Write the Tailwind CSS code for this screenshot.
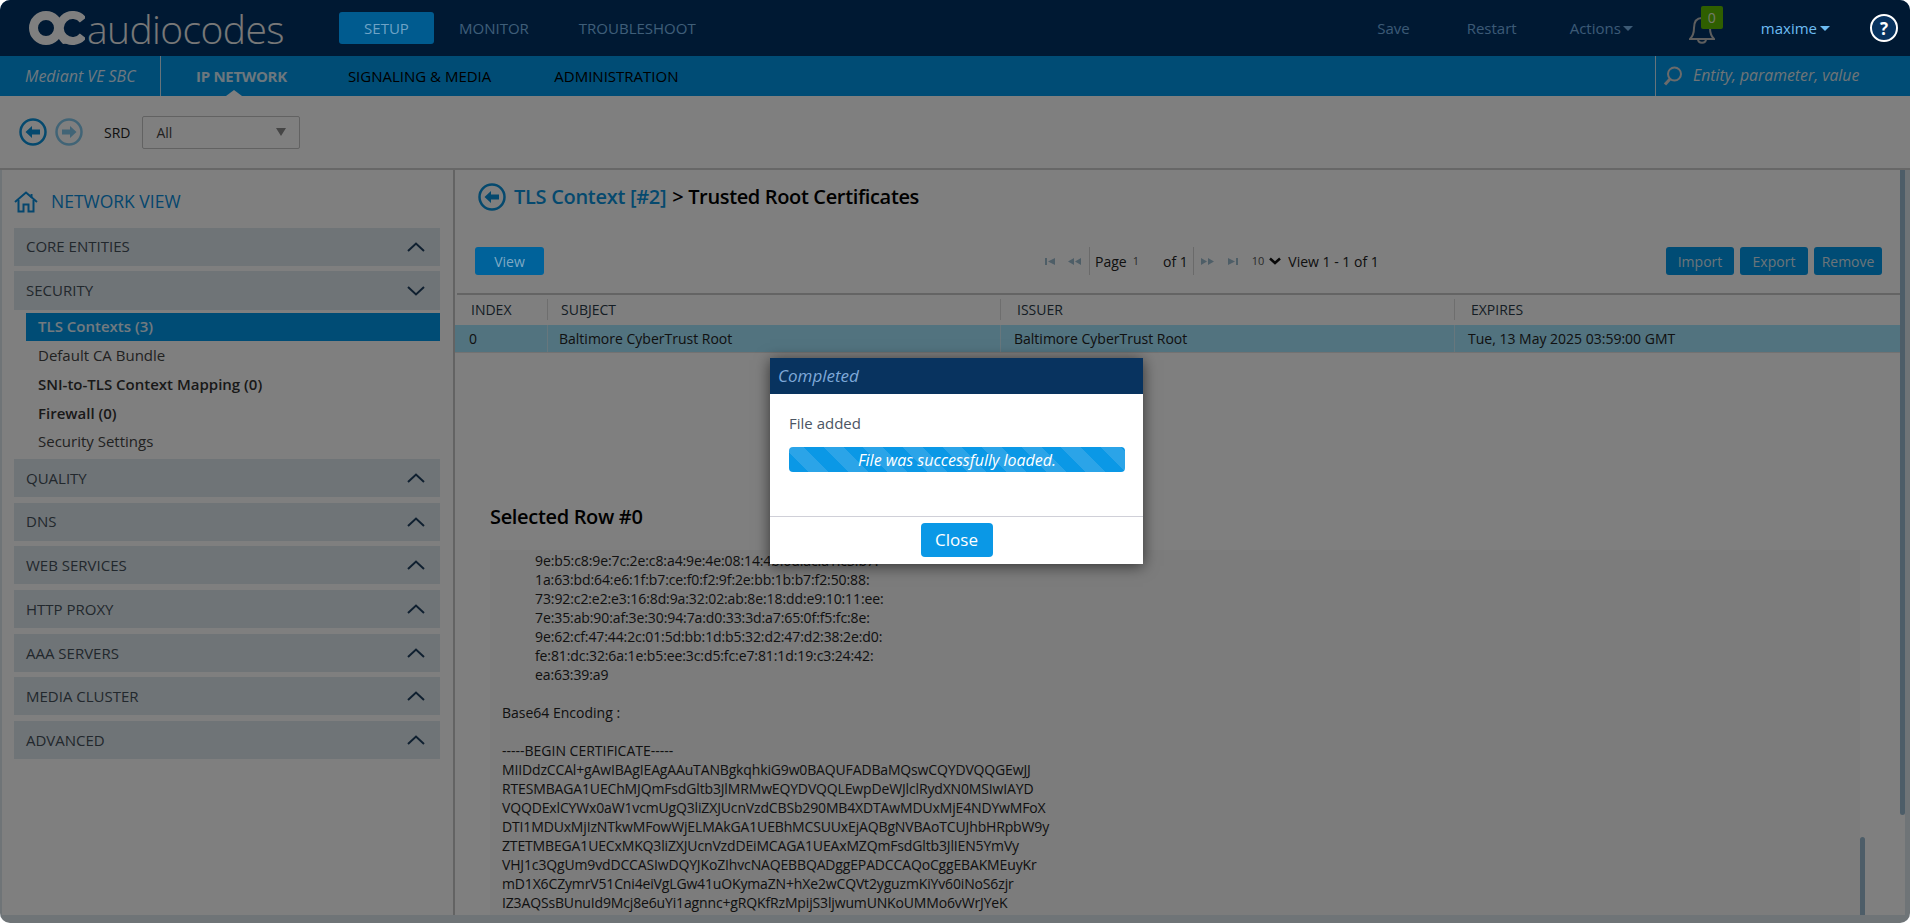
<!DOCTYPE html>
<html lang="en">
<head>
    <meta charset="UTF-8">
    <title>Trusted Root Certificates</title>
    <script src="https://cdn.jsdelivr.net/npm/@tailwindcss/browser@4"></script>
</head>
<body class="bg-white overflow-hidden">
<div class="relative w-[1910px] h-[923px] overflow-hidden rounded-[10px] bg-white font-['Open_Sans',sans-serif] text-[14px] text-[#222]">

    <!-- top bar -->
    <div class="h-[56px] bg-[#003366] flex items-center">
        <div class="w-[339px] pl-[29px] flex items-center h-full">
            <svg width="56" height="34" viewBox="0 0 56 34" class="shrink-0">
                <circle cx="17" cy="17" r="12.5" fill="none" stroke="#fff" stroke-width="9"/>
                <path d="M30 8 C34 16 36 28 44 32 L34 33 C31 30 29 27 28 24Z" fill="#fff"/>
                <path d="M54 9 A13 13 0 1 0 54 25" fill="none" stroke="#fff" stroke-width="8"/>
            </svg>
            <span class="text-[39px] leading-none font-light text-[#f0f0f0] tracking-[-0.6px] ml-[2px]">audiocodes</span>
        </div>
        <div class="relative z-20 w-[95px] h-[32px] bg-[#005b8f] rounded-[3px] flex items-center justify-center text-[#6fa3c6] text-[15px]">SETUP</div>
        <div class="ml-[25px] text-[15px] text-[#7fbcf0]">MONITOR</div>
        <div class="ml-[50px] text-[15px] text-[#7fbcf0]">TROUBLESHOOT</div>
        <div class="flex-1"></div>
        <div class="text-[15px] text-[#78b4ea]">Save</div>
        <div class="ml-[57px] text-[15px] text-[#78b4ea]">Restart</div>
        <div class="ml-[54px] -translate-x-[1px] text-[15px] text-[#78b4ea] flex items-center gap-[2px]">Actions
            <span class="w-0 h-0 border-x-[5px] border-x-transparent border-t-[5px] border-t-[#78b4ea]"></span>
        </div>
        <div class="relative ml-[55px] w-[36px] h-[56px]">
            <svg width="26" height="28" viewBox="0 0 26 28" class="absolute left-0 top-[16px]" fill="none" stroke="#bdbdbd" stroke-width="2">
                <path d="M13 2 C7 2 5 7 5 12 C5 17 4 20 1 23 L25 23 C22 20 21 17 21 12 C21 7 19 2 13 2Z"/>
                <path d="M9 23 C9 28 17 28 17 23"/>
            </svg>
            <div class="absolute left-[12px] top-[6px] w-[22px] h-[23px] rounded-[2px] bg-[#5fbe00] text-[#e6f5d8] text-[14px] leading-[23px] text-center">0</div>
        </div>
        <div class="relative z-20 ml-[36px] text-[15px] text-[#6dbcf2] flex items-center gap-[3px]">maxime
            <span class="w-0 h-0 border-x-[5px] border-x-transparent border-t-[5px] border-t-[#6dbcf2]"></span>
        </div>
        <div class="relative z-20 ml-[40px] mr-[12px] w-[28px] h-[28px] rounded-full border-[2.5px] border-white bg-[#08335f] flex items-center justify-center text-white font-bold text-[17px] leading-none">?</div>
    </div>

    <!-- sub nav -->
    <div class="relative h-[40px] bg-[#0098ea] flex items-center">
        <div class="w-[161px] h-full pl-[25px] flex items-center italic text-[16px] text-[#dcefff] border-r border-[#cfe6f5]">Mediant VE SBC</div>
        <div class="ml-[35px] text-[15px] font-bold text-[#d8eefc] tracking-[-0.3px]">IP NETWORK</div>
        <div class="ml-[61px] text-[15px] text-black">SIGNALING &amp; MEDIA</div>
        <div class="ml-[63px] text-[15px] text-black">ADMINISTRATION</div>
        <span class="absolute left-[226px] bottom-0 w-0 h-0 border-x-[8px] border-x-transparent border-b-[6px] border-b-white"></span>
        <div class="flex-1"></div>
        <div class="w-[255px] h-full border-l border-[#cfe6f5] flex items-center pl-[7px]">
            <svg width="20" height="20" viewBox="0 0 20 20" fill="none" stroke="#d6d6d6" stroke-width="2" class="shrink-0">
                <circle cx="11.5" cy="8" r="6.5"/>
                <path d="M7 13 L2 18.5" stroke-width="3"/>
            </svg>
            <span class="ml-[10px] italic text-[15.8px] text-[#dfe8ee]">Entity, parameter, value</span>
        </div>
    </div>

    <!-- srd toolbar -->
    <div class="h-[74px] pl-[19px] flex items-center border-b-2 border-[#cfcfcf]">
        <svg width="28" height="28" viewBox="0 0 28 28">
            <circle cx="14" cy="14" r="12.5" fill="none" stroke="#0a93dc" stroke-width="2.5"/>
            <path d="M6.5 14 L13 8 L13 11.5 L21 11.5 L21 16.5 L13 16.5 L13 20Z" fill="#0a93dc"/>
        </svg>
        <svg width="28" height="28" viewBox="0 0 28 28" class="ml-[8px] opacity-50">
            <circle cx="14" cy="14" r="12.5" fill="none" stroke="#0a93dc" stroke-width="2.5"/>
            <path d="M21.5 14 L15 8 L15 11.5 L7 11.5 L7 16.5 L15 16.5 L15 20Z" fill="#0a93dc"/>
        </svg>
        <span class="ml-[21px] text-[14px] text-[#222]">SRD</span>
        <div class="ml-[12px] w-[158px] h-[33px] border border-[#c4c4c4] rounded-[2px] pl-[13px] pr-[13px] flex items-center justify-between text-[14px] text-[#444]">
            All
            <span class="w-0 h-0 border-x-[5px] border-x-transparent border-t-[8px] border-t-[#8a8a8a]"></span>
        </div>
    </div>

    <div class="flex h-[753px]">
        <!-- sidebar -->
        <div class="w-[455px] h-full shrink-0 border-r-2 border-[#c6c6c6] pl-[14px] pr-[13px]">
            <div class="h-[58px] pt-[5px] flex items-center">
                <svg width="24" height="22" viewBox="0 0 24 22" fill="none" stroke="#0a8ddc" stroke-width="2" class="shrink-0">
                    <path d="M1 11 L12 1.5 L23 11"/>
                    <path d="M4.5 9 L4.5 20.5 L9.5 20.5 L9.5 13.5 L14.5 13.5 L14.5 20.5 L19.5 20.5 L19.5 9"/>
                    <path d="M17.5 3 L17.5 6.5"/>
                </svg>
                <span class="ml-[13px] text-[17.5px] text-[#0a8ddc]">NETWORK VIEW</span>
            </div>
            <div class="h-[38px] pb-[1px] bg-[#dfe8ee] pl-[12px] pr-[15px] flex items-center justify-between text-[15px] text-[#44505a]">CORE ENTITIES
                <svg width="18" height="10" viewBox="0 0 18 10" fill="none" stroke="#1f4060" stroke-width="2"><path d="M1 9 L9 1.5 L17 9"/></svg>
            </div>
            <div class="mt-[5px] h-[39px] bg-[#dfe8ee] pl-[12px] pr-[15px] flex items-center justify-between text-[15px] text-[#44505a]">SECURITY
                <svg width="18" height="10" viewBox="0 0 18 10" fill="none" stroke="#1f4060" stroke-width="2"><path d="M1 1 L9 8.5 L17 1"/></svg>
            </div>
            <div class="mt-[3px] ml-[12px] h-[28px] pb-[1px] bg-[#0098ea] pl-[12px] flex items-center font-semibold text-[15px] text-[#e4f4ff]">TLS Contexts (3)</div>
            <div class="ml-[12px] pl-[12px] h-[29px] flex items-center text-[15px] text-[#444]">Default CA Bundle</div>
            <div class="ml-[12px] pl-[12px] h-[29px] flex items-center font-semibold text-[15px] text-[#333]">SNI-to-TLS Context Mapping (0)</div>
            <div class="ml-[12px] pl-[12px] h-[28px] flex items-center font-semibold text-[15px] text-[#333]">Firewall (0)</div>
            <div class="ml-[12px] pl-[12px] h-[28px] mb-[4px] flex items-center text-[15px] text-[#444]">Security Settings</div>
            <div class="flex flex-col gap-[5.7px] text-[15px]">
                <div class="h-[38px] bg-[#dfe8ee] pl-[12px] pr-[15px] flex items-center justify-between text-[#44505a]">QUALITY
                    <svg width="18" height="10" viewBox="0 0 18 10" fill="none" stroke="#1f4060" stroke-width="2"><path d="M1 9 L9 1.5 L17 9"/></svg>
                </div>
                <div class="h-[38px] bg-[#dfe8ee] pl-[12px] pr-[15px] flex items-center justify-between text-[#44505a]">DNS
                    <svg width="18" height="10" viewBox="0 0 18 10" fill="none" stroke="#1f4060" stroke-width="2"><path d="M1 9 L9 1.5 L17 9"/></svg>
                </div>
                <div class="h-[38px] bg-[#dfe8ee] pl-[12px] pr-[15px] flex items-center justify-between text-[#44505a]">WEB SERVICES
                    <svg width="18" height="10" viewBox="0 0 18 10" fill="none" stroke="#1f4060" stroke-width="2"><path d="M1 9 L9 1.5 L17 9"/></svg>
                </div>
                <div class="h-[38px] bg-[#dfe8ee] pl-[12px] pr-[15px] flex items-center justify-between text-[#44505a]">HTTP PROXY
                    <svg width="18" height="10" viewBox="0 0 18 10" fill="none" stroke="#1f4060" stroke-width="2"><path d="M1 9 L9 1.5 L17 9"/></svg>
                </div>
                <div class="h-[38px] bg-[#dfe8ee] pl-[12px] pr-[15px] flex items-center justify-between text-[#44505a]">AAA SERVERS
                    <svg width="18" height="10" viewBox="0 0 18 10" fill="none" stroke="#1f4060" stroke-width="2"><path d="M1 9 L9 1.5 L17 9"/></svg>
                </div>
                <div class="h-[38px] bg-[#dfe8ee] pl-[12px] pr-[15px] flex items-center justify-between text-[#44505a]">MEDIA CLUSTER
                    <svg width="18" height="10" viewBox="0 0 18 10" fill="none" stroke="#1f4060" stroke-width="2"><path d="M1 9 L9 1.5 L17 9"/></svg>
                </div>
                <div class="h-[38px] bg-[#dfe8ee] pl-[12px] pr-[15px] flex items-center justify-between text-[#44505a]">ADVANCED
                    <svg width="18" height="10" viewBox="0 0 18 10" fill="none" stroke="#1f4060" stroke-width="2"><path d="M1 9 L9 1.5 L17 9"/></svg>
                </div>
            </div>
        </div>

        <!-- main -->
        <div class="flex-1 min-w-0 pr-[10px]">
            <div class="h-[77px] pl-[23px] pt-[13px] flex items-start">
                <svg width="28" height="28" viewBox="0 0 28 28" class="shrink-0">
                    <circle cx="14" cy="14" r="12.5" fill="none" stroke="#0a93dc" stroke-width="2.5"/>
                    <path d="M6.5 14 L13 8 L13 11.5 L21 11.5 L21 16.5 L13 16.5 L13 20Z" fill="#0a93dc"/>
                </svg>
                <span class="ml-[8px] text-[20px] leading-[28px] font-semibold tracking-[-0.3px] text-[#0a93dc]">TLS Context [#2]</span>
                <span class="ml-[6px] text-[20px] leading-[28px] font-semibold tracking-[-0.35px] text-black">&gt; Trusted Root Certificates</span>
            </div>

            <div class="h-[46px] pl-[20px] pr-[18px] flex items-start">
                <div class="relative z-20 w-[69px] h-[28px] rounded-[3px] bg-[#00629a] flex items-center justify-center text-[#7fa9c4]">View</div>
                <div class="ml-[501px] h-[28px] flex items-center text-[#222]">
                    <svg width="15" height="9" viewBox="0 0 15 9" fill="#9dbccf"><rect x="0" y="1" width="2" height="7"/><path d="M3 4.5 L10 1 L10 8Z"/></svg>
                    <svg width="15" height="9" viewBox="0 0 15 9" fill="#9dbccf" class="ml-[7px]"><path d="M1 4.5 L7 1 L7 8Z"/><path d="M8 4.5 L14 1 L14 8Z"/></svg>
                    <span class="ml-[7px] h-[28px] border-l border-[#d5d5d5]"></span>
                    <span class="ml-[5px]">Page</span>
                    <span class="ml-[6px] text-[11px] text-[#555]">1</span>
                    <span class="ml-[24px]">of 1</span>
                    <span class="ml-[5px] h-[28px] border-l border-[#d5d5d5]"></span>
                    <svg width="15" height="9" viewBox="0 0 15 9" fill="#9dbccf" class="ml-[6px]"><path d="M1 1 L7 4.5 L1 8Z"/><path d="M8 1 L14 4.5 L8 8Z"/></svg>
                    <svg width="15" height="9" viewBox="0 0 15 9" fill="#9dbccf" class="ml-[11px]"><path d="M2 1 L9 4.5 L2 8Z"/><rect x="10" y="1" width="2" height="7"/></svg>
                    <span class="ml-[11px] text-[11px] text-[#555]">10</span>
                    <svg width="12" height="8" viewBox="0 0 12 8" fill="none" stroke="#111" stroke-width="2.5" class="ml-[5px]"><path d="M1 1.5 L6 6 L11 1.5"/></svg>
                    <span class="ml-[7px]">View 1 - 1 of 1</span>
                </div>
                <div class="flex-1"></div>
                <div class="flex gap-[6px]">
                    <div class="w-[68px] h-[28px] rounded-[3px] bg-[#0098ea] flex items-center justify-center text-[#d8e8f2]">Import</div>
                    <div class="w-[68px] h-[28px] rounded-[3px] bg-[#0098ea] flex items-center justify-center text-[#d8e8f2]">Export</div>
                    <div class="w-[68px] h-[28px] rounded-[3px] bg-[#0098ea] flex items-center justify-center text-[#d8e8f2]">Remove</div>
                </div>
            </div>

            <!-- table -->
            <div class="border-t-2 border-[#c8c8c8] ml-[2px] mr-[-5px] h-[2px]"></div>
            <div class="grid grid-cols-[93px_453px_454px_1fr] h-[28px] items-center text-[#2a3a48] text-[14px]">
                <div class="pl-[16px] border-r border-[#dcdcdc]">INDEX</div>
                <div class="pl-[13px] border-r border-[#dcdcdc]">SUBJECT</div>
                <div class="pl-[16px] border-r border-[#dcdcdc]">ISSUER</div>
                <div class="pl-[16px]">EXPIRES</div>
            </div>
            <div class="grid grid-cols-[93px_453px_454px_1fr] h-[28px] mt-[2px] mr-[-5px] bg-[#a4e6ff] items-center text-[#222] border-b border-[#e5e5e5]">
                <div class="h-full flex items-center pl-[14px] border-r border-[#cfeefa]">0</div>
                <div class="h-full flex items-center pl-[11px] border-r border-[#cfeefa]">Baltimore CyberTrust Root</div>
                <div class="h-full flex items-center pl-[13px] border-r border-[#cfeefa]">Baltimore CyberTrust Root</div>
                <div class="h-full flex items-center pl-[13px]">Tue, 13 May 2025 03:59:00 GMT</div>
            </div>

            <h2 class="mt-[150px] pl-[35px] text-[20px] leading-[28px] font-semibold tracking-[-0.33px] text-black">Selected Row #0</h2>

            <!-- certificate text -->
            <div class="mt-[19px] ml-[35px] mr-[40px] h-[365px] overflow-hidden bg-[#f8f8f8] pl-[12px] pt-[1px] text-[14px] leading-[19px] text-[#222]">
                <pre class="pl-[33px] font-['Open_Sans',sans-serif] tracking-[-0.1px]">9e:b5:c8:9e:7c:2e:c8:a4:9e:4e:08:14:4b:6d:ac:a1:c3:b7:
1a:63:bd:64:e6:1f:b7:ce:f0:f2:9f:2e:bb:1b:b7:f2:50:88:
73:92:c2:e2:e3:16:8d:9a:32:02:ab:8e:18:dd:e9:10:11:ee:
7e:35:ab:90:af:3e:30:94:7a:d0:33:3d:a7:65:0f:f5:fc:8e:
9e:62:cf:47:44:2c:01:5d:bb:1d:b5:32:d2:47:d2:38:2e:d0:
fe:81:dc:32:6a:1e:b5:ee:3c:d5:fc:e7:81:1d:19:c3:24:42:
ea:63:39:a9</pre>
                <div class="mt-[19px]">Base64 Encoding :</div>
                <div class="mt-[19px]">-----BEGIN CERTIFICATE-----</div>
                <pre class="font-['Open_Sans',sans-serif] tracking-[-0.15px]">MIIDdzCCAl+gAwIBAgIEAgAAuTANBgkqhkiG9w0BAQUFADBaMQswCQYDVQQGEwJJ
RTESMBAGA1UEChMJQmFsdGltb3JlMRMwEQYDVQQLEwpDeWJlclRydXN0MSIwIAYD
VQQDExlCYWx0aW1vcmUgQ3liZXJUcnVzdCBSb290MB4XDTAwMDUxMjE4NDYwMFoX
DTI1MDUxMjIzNTkwMFowWjELMAkGA1UEBhMCSUUxEjAQBgNVBAoTCUJhbHRpbW9y
ZTETMBEGA1UECxMKQ3liZXJUcnVzdDEiMCAGA1UEAxMZQmFsdGltb3JlIEN5YmVy
VHJ1c3QgUm9vdDCCASIwDQYJKoZIhvcNAQEBBQADggEPADCCAQoCggEBAKMEuyKr
mD1X6CZymrV51Cni4eiVgLGw41uOKymaZN+hXe2wCQVt2yguzmKiYv60iNoS6zjr
IZ3AQSsBUnuId9Mcj8e6uYi1agnnc+gRQKfRzMpijS3ljwumUNKoUMMo6vWrJYeK</pre>
            </div>
        </div>
    </div>

    <!-- bottom strip and scrollbars -->
    <div class="absolute left-0 right-0 bottom-0 h-[8px] bg-[#dfe8ee]"></div>
    <div class="absolute top-[170px] right-0 bottom-0 w-[5px] bg-[#dfe8ee]"></div>
    <div class="absolute top-[170px] left-0 bottom-0 w-[2px] bg-[#dfe8ee]"></div>
    <div class="absolute top-[170px] left-[1900px] w-[5px] h-[645px] rounded-b-[3px] bg-[#9abbd0]"></div>
    <div class="absolute top-[837px] left-[1860px] w-[5px] h-[78px] rounded-t-[3px] bg-[#9abbd0]"></div>

    <!-- dim layer -->
    <div class="absolute inset-0 z-10 bg-black/50"></div>

    <!-- dialog -->
    <div class="absolute z-30 left-[770px] top-[358px] w-[373px] h-[206px] bg-white shadow-[0_2px_14px_rgba(0,0,0,0.6)] flex flex-col">
        <div class="h-[36px] bg-[#08335f] pl-[8px] flex items-center italic text-[17px] text-[#7ea8d8]">Completed</div>
        <div class="h-[123px] border-b border-[#d0d0d8]">
            <div class="pl-[19px] pt-[19px] text-[15px] leading-[20px] text-[#4b5563]">File added</div>
            <div class="ml-[19px] mt-[14px] w-[336px] h-[25px] rounded-[4px] bg-[repeating-linear-gradient(45deg,#0a98e6_0_14px,#2ba4e8_14px_28px)] flex items-center justify-center italic text-[16px] text-white">File was successfully loaded.</div>
        </div>
        <div class="flex-1 flex items-start justify-center pt-[6px]">
            <div class="w-[72px] h-[34px] rounded-[4px] bg-[#0a98e6] flex items-center justify-center text-white text-[17px]">Close</div>
        </div>
    </div>
</div>
</body>
</html>
